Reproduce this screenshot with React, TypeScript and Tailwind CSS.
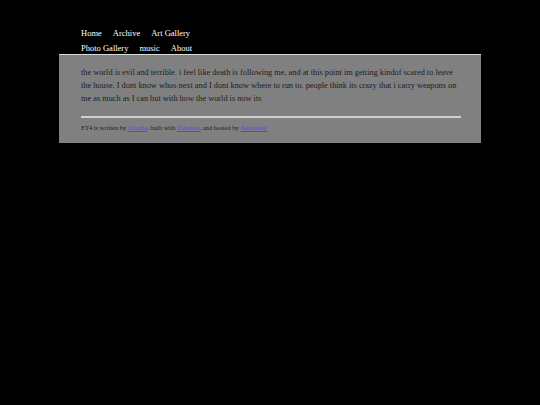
export default function App() {
  const serif = { fontFamily: '"Liberation Serif", "DejaVu Serif", serif' };
  return (
    <div className="w-[540px] h-[405px] bg-black overflow-hidden" style={serif}>
      <div className="ml-[59px] w-[422px] pt-[26px]">
        {/* nav */}
        <nav className="pl-[22px] text-[8.5px] leading-[15px] text-white">
          <div className="flex gap-[11px]">
            <a>Home</a>
            <a>Archive</a>
            <a>Art Gallery</a>
          </div>
          <div className="flex gap-[11px]">
            <a>Photo Gallery</a>
            <a>music</a>
            <a>About</a>
          </div>
        </nav>

        {/* content box */}
        <div className="-mt-[2px] border-t border-[#d9d9d9] bg-[#808080] pl-[22px] pr-[20px] pt-[11px] pb-[10px]">
          <p className="text-[8.3px] leading-[13px] text-[#1c1c1c]">
            the world is evil and terrible. i feel like death is following me, and at this point im getting kindof scared to leave
            the house. I dont know whos next and I dont know where to run to. people think its crazy that i carry weapons on
            me as much as I can but with how the world is now its
          </p>
          <hr className="mt-[11px] border-0 h-[2px] bg-[#d0d0d0]" />
          <p className="mt-[5px] text-[6.5px] leading-[10px] text-[#1c1c1c]">
            ET4 is written by <a className="text-[#4646ff] underline">Charlie</a>, built with{" "}
            <a className="text-[#4646ff] underline">Zonelets</a>, and hosted by{" "}
            <a className="text-[#4646ff] underline">Neocities!</a>
          </p>
        </div>
      </div>
    </div>
  );
}
